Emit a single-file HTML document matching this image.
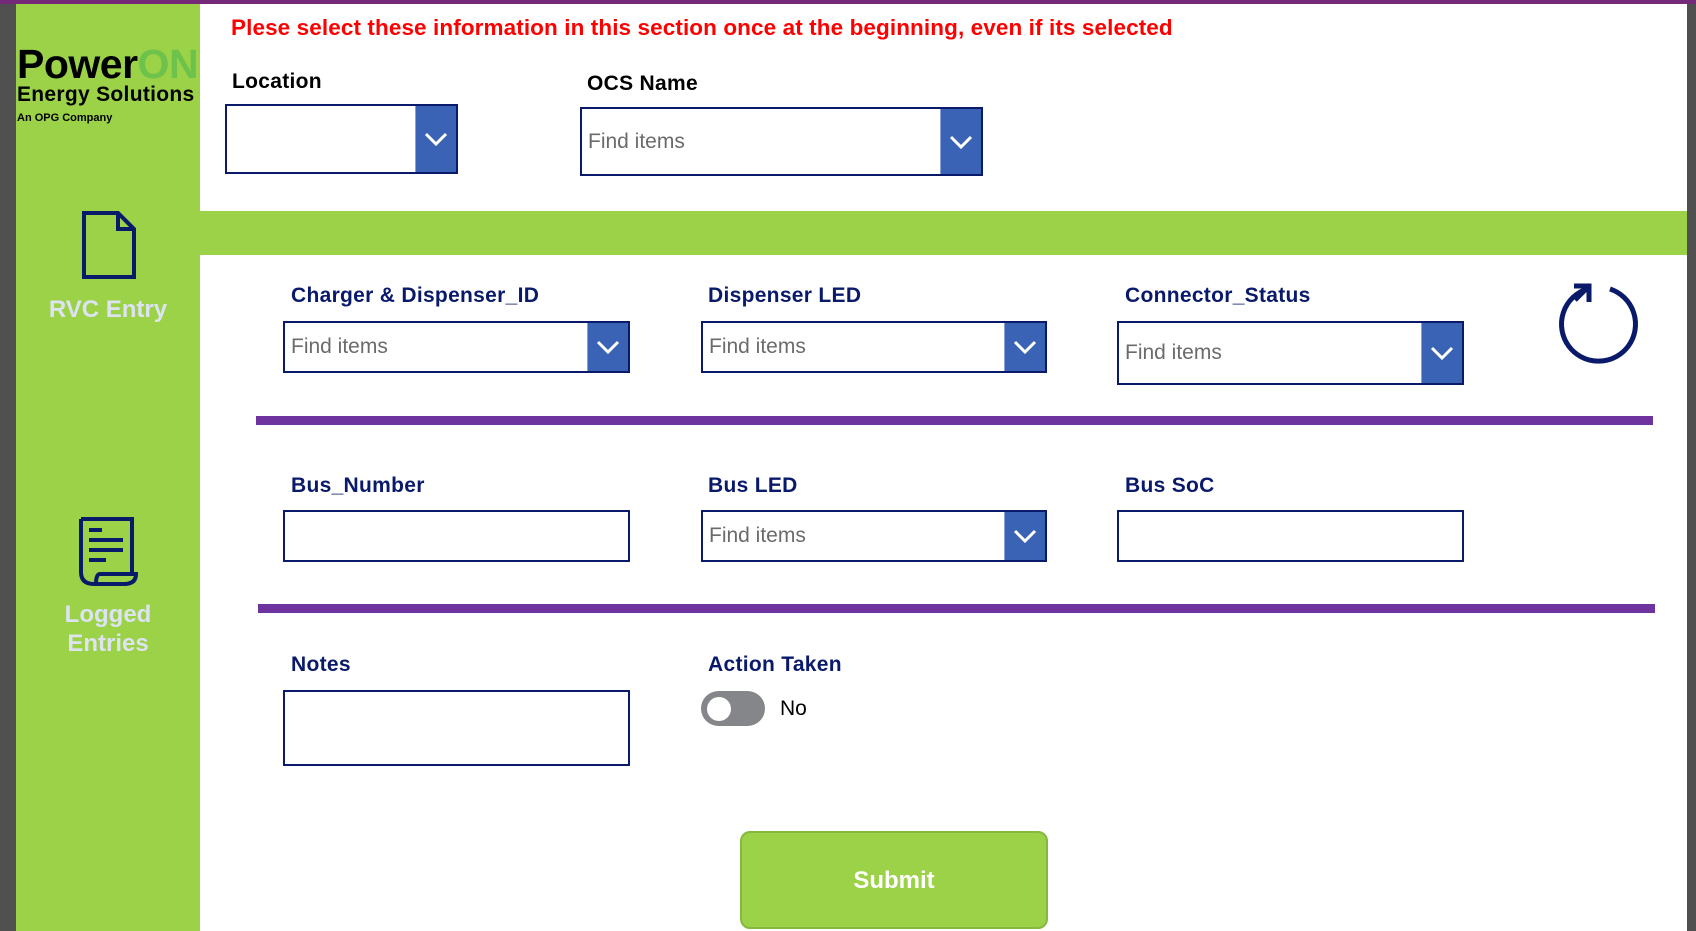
<!DOCTYPE html>
<html><head><meta charset="utf-8"><style>
*{margin:0;padding:0;box-sizing:border-box}
body{width:1696px;height:931px;overflow:hidden;background:#fff;position:relative;font-family:"Liberation Sans",sans-serif}
.a{position:absolute}
.lbl{position:absolute;font-weight:bold;font-size:21px;color:#0a1a6b;white-space:nowrap;line-height:1;letter-spacing:0.3px}
.dd{position:absolute;border:2px solid #0a1a6b;background:#fff}
.dd .ph{position:absolute;left:6px;top:50%;transform:translateY(-50%);font-size:21px;color:#6b6b6b}
.dd .ch{position:absolute;right:0;top:0;bottom:0;width:41px;background:#3a62b5;border-left:1px solid #8aa0d8}
.dd .ch svg{position:absolute;left:50%;top:50%;transform:translate(-50%,-50%)}
.tb{position:absolute;border:2px solid #0a1a6b;background:#fff}
</style></head><body>
<div class="a" style="left:0;top:0;width:1696px;height:4px;background:#742a78"></div>
<div class="a" style="left:0;top:4px;width:16px;height:927px;background:#505050"></div>
<div class="a" style="left:1687px;top:4px;width:9px;height:927px;background:#505050"></div>
<div class="a" style="left:16px;top:4px;width:184px;height:927px;background:#9bd247"></div>
<div class="a" style="left:200px;top:211px;width:1487px;height:44px;background:#9bd247"></div>

<div class="a" style="left:17px;top:44px;font-size:41px;font-weight:900;letter-spacing:-0.5px;color:#000;line-height:1">Power<span style="color:#6cc24a">ON</span></div>
<div class="a" style="left:17px;top:84px;font-size:21px;font-weight:bold;color:#000;letter-spacing:0.3px;line-height:1">Energy Solutions</div>
<div class="a" style="left:17px;top:113px;font-size:11px;font-weight:bold;color:#000;line-height:1">An OPG Company</div>

<svg class="a" style="left:80px;top:209px" width="58" height="72" viewBox="0 0 58 72"><path d="M4 4 H38 L54 20 V68 H4 Z" fill="none" stroke="#0a1a6b" stroke-width="4"/><path d="M38 4 V20 H54" fill="none" stroke="#0a1a6b" stroke-width="4"/></svg>
<div class="a" style="left:16px;top:296px;width:184px;text-align:center;font-size:24px;font-weight:bold;color:#dde3f3">RVC Entry</div>
<svg class="a" style="left:78px;top:516px" width="62" height="72" viewBox="0 0 62 72"><path d="M3 3 H54 V58 M3 3 V56 Q3 68 16 68 H46 Q58 68 58 58 H22 Q18 58 18 68" fill="none" stroke="#0a1a6b" stroke-width="4"/><rect x="11" y="12" width="13" height="4" fill="#0a1a6b"/><rect x="11" y="22" width="34" height="4" fill="#0a1a6b"/><rect x="11" y="32" width="34" height="4" fill="#0a1a6b"/><rect x="11" y="42" width="17" height="4" fill="#0a1a6b"/></svg>
<div class="a" style="left:16px;top:600px;width:184px;text-align:center;font-size:24px;font-weight:bold;color:#dde3f3;line-height:29px">Logged<br>Entries</div>

<div class="a" style="left:231px;top:15px;font-size:22.5px;font-weight:bold;color:#f00;white-space:nowrap;letter-spacing:0.1px">Plese select these information in this section once at the beginning, even if its selected</div>

<div class="lbl" style="left:232px;top:71px;color:#000">Location</div>
<div class="dd" style="left:225px;top:104px;width:233px;height:70px"><div class="ch"><svg width="24" height="14"><path d="M2 2 L12 12 L22 2" fill="none" stroke="#fff" stroke-width="3"/></svg></div></div>
<div class="lbl" style="left:587px;top:73px;color:#000">OCS Name</div>
<div class="dd" style="left:580px;top:107px;width:403px;height:69px"><span class="ph">Find items</span><div class="ch"><svg width="24" height="14"><path d="M2 2 L12 12 L22 2" fill="none" stroke="#fff" stroke-width="3"/></svg></div></div>

<div class="lbl" style="left:291px;top:285px">Charger &amp; Dispenser_ID</div>
<div class="dd" style="left:283px;top:321px;width:347px;height:52px"><span class="ph">Find items</span><div class="ch"><svg width="24" height="14"><path d="M2 2 L12 12 L22 2" fill="none" stroke="#fff" stroke-width="3"/></svg></div></div>
<div class="lbl" style="left:708px;top:285px">Dispenser LED</div>
<div class="dd" style="left:701px;top:321px;width:346px;height:52px"><span class="ph">Find items</span><div class="ch"><svg width="24" height="14"><path d="M2 2 L12 12 L22 2" fill="none" stroke="#fff" stroke-width="3"/></svg></div></div>
<div class="lbl" style="left:1125px;top:285px">Connector_Status</div>
<div class="dd" style="left:1117px;top:321px;width:347px;height:64px"><span class="ph">Find items</span><div class="ch"><svg width="24" height="14"><path d="M2 2 L12 12 L22 2" fill="none" stroke="#fff" stroke-width="3"/></svg></div></div>

<svg class="a" style="left:1555px;top:280px" width="90" height="90" viewBox="0 0 90 90"><path d="M55 9 A37 37 0 1 1 32 9" fill="none" stroke="#0a1a6b" stroke-width="5"/><path d="M19 6 H34 V22" fill="none" stroke="#0a1a6b" stroke-width="5"/><path d="M33 7 L20 20" stroke="#0a1a6b" stroke-width="5"/></svg>

<div class="a" style="left:256px;top:416px;width:1397px;height:9px;background:#6f33a0"></div>

<div class="lbl" style="left:291px;top:475px">Bus_Number</div>
<div class="tb" style="left:283px;top:510px;width:347px;height:52px"></div>
<div class="lbl" style="left:708px;top:475px">Bus LED</div>
<div class="dd" style="left:701px;top:510px;width:346px;height:52px"><span class="ph">Find items</span><div class="ch"><svg width="24" height="14"><path d="M2 2 L12 12 L22 2" fill="none" stroke="#fff" stroke-width="3"/></svg></div></div>
<div class="lbl" style="left:1125px;top:475px">Bus SoC</div>
<div class="tb" style="left:1117px;top:510px;width:347px;height:52px"></div>

<div class="a" style="left:258px;top:604px;width:1397px;height:9px;background:#6f33a0"></div>

<div class="lbl" style="left:291px;top:654px">Notes</div>
<div class="tb" style="left:283px;top:690px;width:347px;height:76px"></div>
<div class="lbl" style="left:708px;top:654px">Action Taken</div>
<div class="a" style="left:701px;top:691px;width:64px;height:35px;border-radius:18px;background:#85868a"></div>
<div class="a" style="left:707px;top:697px;width:24px;height:24px;border-radius:50%;background:#fff"></div>
<div class="a" style="left:780px;top:697px;font-size:21px;color:#000">No</div>

<div class="a" style="left:740px;top:831px;width:308px;height:98px;border-radius:10px;background:#9bd247;border:2px solid #86b83e;color:#fff;font-weight:bold;font-size:24px;text-align:center;line-height:96px">Submit</div>
</body></html>
